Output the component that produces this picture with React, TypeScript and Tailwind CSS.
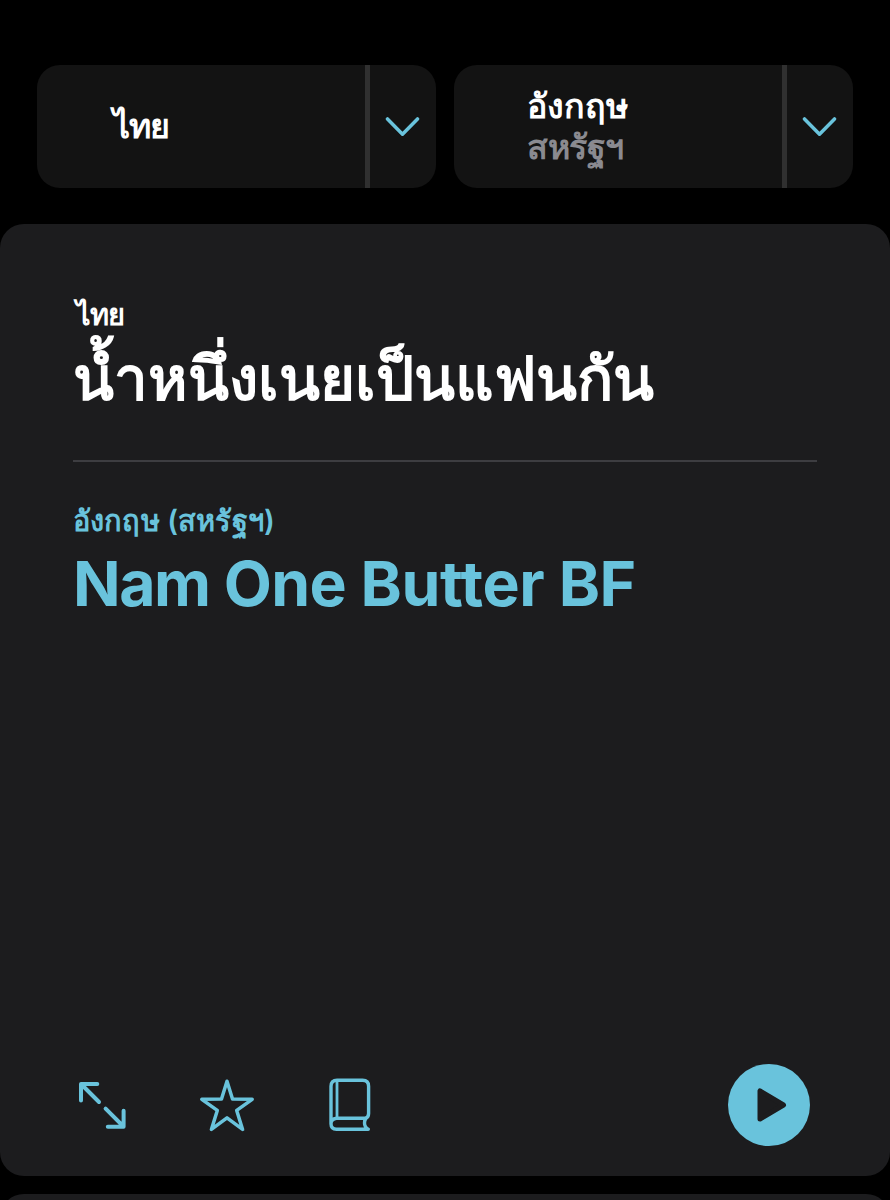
function Chevron() {
  return (
    <svg className="h-5 w-9" viewBox="0 0 36 20" fill="none" stroke="#69c3dc" strokeWidth="3.5" strokeLinecap="round" strokeLinejoin="round">
      <path d="M2.5 1.9 17.5 17.2 32.5 1.9" />
    </svg>
  );
}

function ExpandIcon() {
  return (
    <svg className="h-[60px] w-[60px]" viewBox="0 0 60 60" fill="none" stroke="#69c3dc" strokeWidth="4" strokeLinecap="round" strokeLinejoin="round">
      <path d="M24.3 9H8V25.5M8.5 9.5 26 27M32.6 33.6 50.5 51.5M50.6 35.8V51.8H34.8" />
    </svg>
  );
}

function StarIcon() {
  return (
    <svg className="h-[60px] w-[60px]" viewBox="0 0 60 60" fill="none" stroke="#69c3dc" strokeWidth="3.5" strokeLinejoin="round">
      <path d="M30 6.2 35.5 24 55.2 24.3 39.7 35.4 45.6 54.4 30 42.8 14.4 54.4 20.3 35.4 4.8 24.3 24.5 24Z" />
    </svg>
  );
}

function BookIcon() {
  return (
    <svg className="h-[60px] w-[60px]" viewBox="0 0 60 60" fill="none" stroke="#69c3dc" strokeWidth="3.4" strokeLinecap="round" strokeLinejoin="round">
      <path d="M11 48.8V11.3Q11 5.3 17 5.3H42.6Q48.6 5.3 48.6 11.3V38.5Q48.6 42.8 45 43.2H16.5Q11 43.7 11 48.8Q11 54.3 16.5 54.3H48.3Q44.5 52.3 44.5 48Q44.5 45 46.4 42.6" />
      <path d="M17 5.8V43" strokeWidth="2.8" strokeLinecap="butt" />
    </svg>
  );
}

function PlayIcon() {
  return (
    <svg className="ml-[6px] h-9 w-8" viewBox="0 0 32 36" fill="#1c1c1e" stroke="#1c1c1e" strokeWidth="5" strokeLinejoin="round">
      <path d="M4 4V32L27.5 18Z" />
    </svg>
  );
}

function LanguagePicker({ name, region }: { name: string; region?: string }) {
  return (
    <div className="flex h-[123px] w-[399px] overflow-hidden rounded-[23px] bg-[#131313]">
      <div className={`flex w-[328px] flex-col justify-center pb-[2px] text-[34px] font-semibold leading-[41px] text-white ${region ? "pl-[73px]" : "pl-[76px] tracking-[-1px]"}`}>
        <span>{name}</span>
        {region && <span className="tracking-[-0.5px] text-[#8a8a90]">{region}</span>}
      </div>
      <div className="w-[5px] bg-[#303030]" />
      <button className="flex flex-1 items-center justify-center">
        <Chevron />
      </button>
    </div>
  );
}

export default function App() {
  return (
    <div className="flex h-[1200px] w-[890px] flex-col overflow-hidden bg-black font-['Inter','Liberation_Sans',sans-serif]">
      <header className="flex gap-[18px] px-[37px] pt-[65px]">
        <LanguagePicker name="ไทย" />
        <LanguagePicker name="อังกฤษ" region="สหรัฐฯ" />
      </header>
      <main className="mt-[36px] flex h-[952px] shrink-0 flex-col rounded-[24px] bg-[#1c1c1e] px-[73px]">
        <div className="mt-[71px] h-[40px] pl-[3px] text-[29px] font-semibold leading-[40px] tracking-[-0.8px] text-white">ไทย</div>
        <div className="h-[84px] whitespace-nowrap text-[60px] font-bold leading-[86px] text-white">น้ำหนึ่งเนยเป็นแฟนกัน</div>
        <div className="mt-[41px] h-[2px] shrink-0 bg-[#3d3d41]" />
        <div className="mt-[39px] h-[40px] text-[29px] font-semibold leading-[40px] tracking-[0.15px] text-[#69c3dc]">อังกฤษ (สหรัฐฯ)</div>
        <div className="h-[84px] whitespace-nowrap text-[62.5px] font-bold leading-[84px] tracking-[-0.6px] text-[#69c3dc]">
          <span className="tracking-[-1.5px]">Nam</span> One <span className="tracking-[-0.3px]">Butter</span> BF
        </div>
        <div className="mt-auto mb-[30px] flex h-[82px] items-center pr-[7px]">
          <div className="flex">
            <button><ExpandIcon /></button>
            <button className="ml-[64px]"><StarIcon /></button>
            <button className="ml-[63px]"><BookIcon /></button>
          </div>
          <button className="ml-auto flex h-[82px] w-[82px] items-center justify-center rounded-full bg-[#69c3dc]">
            <PlayIcon />
          </button>
        </div>
      </main>
      <div className="mt-[18px] h-[60px] shrink-0 rounded-t-[24px] bg-[#1c1c1e]" />
    </div>
  );
}
